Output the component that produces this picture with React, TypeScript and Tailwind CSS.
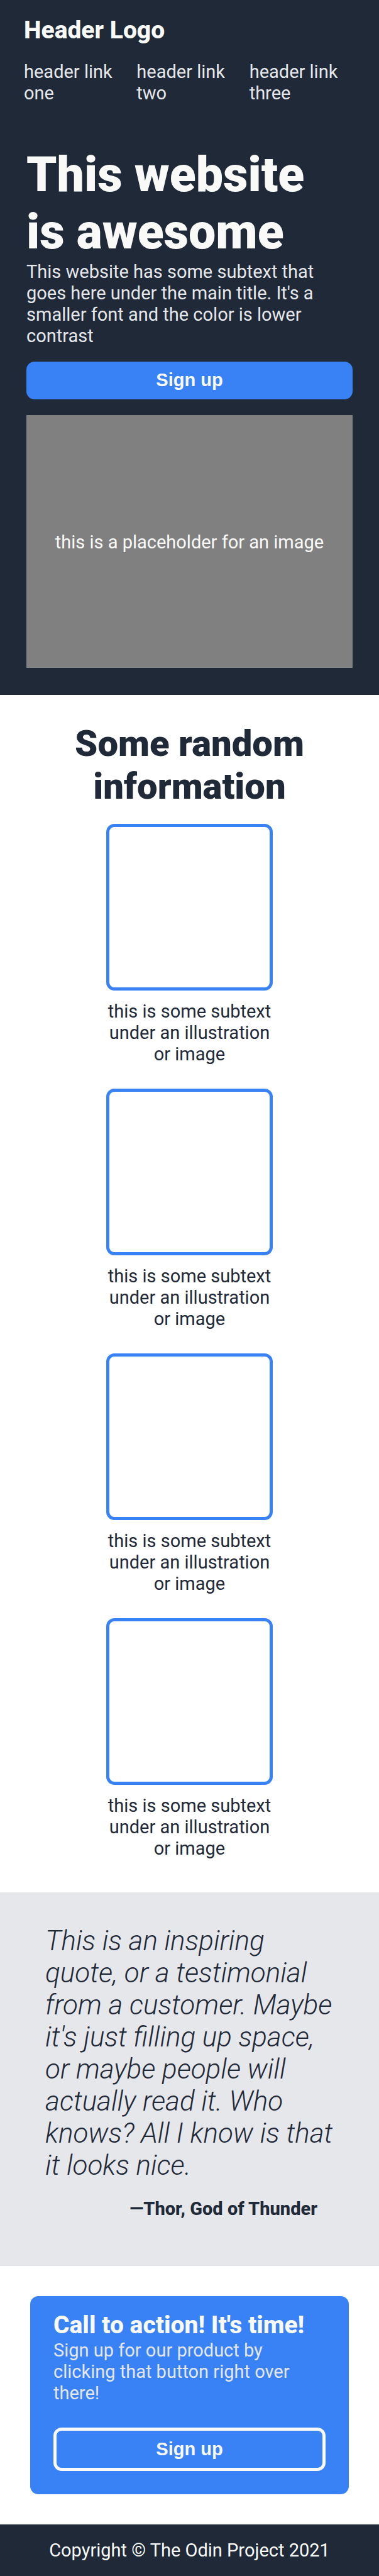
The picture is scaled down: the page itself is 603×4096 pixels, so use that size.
const links = ["header link one", "header link two", "header link three"];
const cards = [1, 2, 3, 4];

function Header() {
  return (
    <header className="px-[38px] pt-[25px]">
      <div className="text-[39px] leading-[46px] font-extrabold text-[#f9faf8]">Header Logo</div>
      <nav className="mt-[26px]">
        <ul className="grid grid-cols-3 gap-[11px]">
          {links.map((label) => (
            <li key={label}>
              <a href="#" className="block text-[#e5e7eb]">
                {label}
              </a>
            </li>
          ))}
        </ul>
      </nav>
    </header>
  );
}

function Hero() {
  return (
    <section className="px-[42px] pt-[68px] pb-[43px]">
      <h1 className="text-[77px] leading-[91px] font-black text-[#f9faf8]">This website is awesome</h1>
      <p className="text-[#e5e7eb]">
        This website has some subtext that goes here under the main title. It's a smaller font and the color is lower
        contrast
      </p>
      <button
        type="button"
        className="mt-6 block h-[60px] w-full rounded-[13px] bg-[#3882f6] pb-0.5 font-['Liberation_Sans',sans-serif] font-bold text-[#f9faf8]"
      >
        Sign up
      </button>
      <div className="mt-[25px] flex h-[402px] items-center justify-center bg-[#808080] pt-0.5 text-[#f9faf8]">
        this is a placeholder for an image
      </div>
    </section>
  );
}

function Information() {
  return (
    <section className="flex flex-col items-center px-[42px] pt-[43px] pb-[53px]">
      <h2 className="max-w-[440px] text-center text-[58px] leading-[68px] font-black">Some random information</h2>
      <div className="mt-[26px] flex flex-col gap-[38px]">
        {cards.map((id) => (
          <figure key={id} className="w-[265px]">
            <div className="aspect-square rounded-[13px] border-5 border-[#3882f6]" />
            <figcaption className="mt-4 text-center">this is some subtext under an illustration or image</figcaption>
          </figure>
        ))}
      </div>
    </section>
  );
}

function Quote() {
  return (
    <section className="bg-[#e5e7eb] pt-[52px] pr-[60px] pb-[74px] pl-[72px]">
      <blockquote className="text-[44px] leading-[51px] font-light italic">
        This is an inspiring quote, or a testimonial from a customer. Maybe it's just filling up space, or maybe people
        will actually read it. Who knows? All I know is that it looks nice.
      </blockquote>
      <p className="mt-[26px] pr-[38px] text-right font-extrabold">—Thor, God of Thunder</p>
    </section>
  );
}

function CallToAction() {
  return (
    <section className="p-12">
      <div className="rounded-[13px] bg-[#3882f6] px-[37px] pt-[23px] pb-[37px]">
        <h3 className="text-[39px] leading-[46px] font-extrabold text-[#f9faf8]">Call to action! It's time!</h3>
        <p className="text-[#e5e7eb]">Sign up for our product by clicking that button right over there!</p>
        <button
          type="button"
          className="mt-[38px] block h-[69px] w-full rounded-[13px] border-5 border-[#f9faf8] pb-0.5 font-['Liberation_Sans',sans-serif] font-bold text-[#f9faf8]"
        >
          Sign up
        </button>
      </div>
    </section>
  );
}

export default function App() {
  return (
    <div className="bg-white font-[Roboto,sans-serif] text-[29px] leading-[34px] text-[#1f2937]">
      <div className="bg-[#1f2937]">
        <Header />
        <Hero />
      </div>
      <Information />
      <Quote />
      <CallToAction />
      <footer className="bg-[#1f2937] px-6 py-6 text-center text-[#f9faf8]">
        Copyright © The Odin Project 2021
      </footer>
    </div>
  );
}
